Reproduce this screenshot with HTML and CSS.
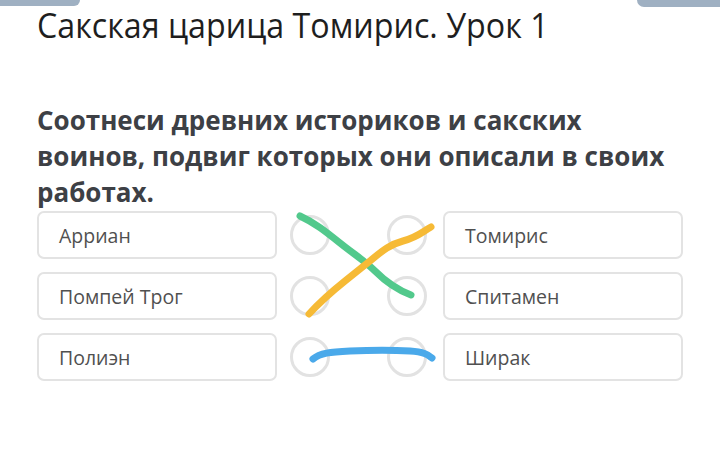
FILE: index.html
```html
<!DOCTYPE html>
<html lang="ru">
<head>
<meta charset="utf-8">
<link rel="stylesheet" href="styles.css">
</head>
<body>
<div class="tabs"><div class="tab tab-left"></div><div class="tab tab-right"></div></div>
<main class="page">
  <h1 class="title"><span class="title-text">Сакская царица Томирис. Урок 1</span></h1>
  <p class="question">Соотнеси древних историков и сакских воинов, подвиг которых они описали в своих работах.</p>
  <div class="match">
    <div class="box">Арриан</div>
    <div class="mid"><span class="dot"></span><span class="dot"></span></div>
    <div class="box">Томирис</div>
    <div class="box">Помпей Трог</div>
    <div class="mid"><span class="dot"></span><span class="dot"></span></div>
    <div class="box">Спитамен</div>
    <div class="box">Полиэн</div>
    <div class="mid"><span class="dot"></span><span class="dot"></span></div>
    <div class="box">Ширак</div>
    <svg class="lines" width="166" height="180" viewBox="277 206 166 180">
      <path d="M300 217 C315 224 325 232 340 244 S365 262 375 272 S395 290 411 296" class="ln green"/>
      <path d="M309 315 C320 303 330 294 345 282 S360 270 370 262 S388 246 403 242 S422 233 431 228" class="ln orange"/>
      <path d="M313 360 C320 354 330 353 350 352 S395 351 410 352 S428 356 432 359" class="ln blue"/>
    </svg>
  </div>
</main>
</body>
</html>
```
FILE: styles.css
```css
html, body {
  margin: 0;
  padding: 0;
  background: #ffffff;
}
body {
  width: 720px;
  height: 449px;
  overflow: hidden;
  position: relative;
  font-family: "Open Sans", "Noto Sans", sans-serif;
}
.tabs {
  display: flex;
  justify-content: space-between;
  height: 7px;
}
.tab {
  background: #9fb0c2;
  height: 6px;
}
.tab-left {
  width: 80px;
  border-bottom-right-radius: 8px;
}
.tab-right {
  width: 83px;
  height: 7px;
  border-bottom-left-radius: 8px;
}
.page {
  padding-left: 37px;
}
.title {
  margin: 0;
  font-weight: 400;
  font-size: 35px;
  line-height: 36px;
  color: #1e1e1e;
  height: 40px;
  white-space: nowrap;
}
.title-text {
  display: inline-block;
  transform-origin: 0 50%;
  transform: scaleX(0.92);
}
.question {
  margin: 55px 0 0 0;
  width: 650px;
  font-weight: 700;
  font-size: 26px;
  line-height: 36px;
  color: #3d4045;
}
.match {
  position: relative;
  margin-top: 1px;
  display: grid;
  grid-template-columns: 240px 166px 240px;
  grid-auto-rows: 48px;
  row-gap: 13px;
}
.box {
  box-sizing: border-box;
  border: 2px solid #e3e3e3;
  border-radius: 7px;
  padding-left: 20px;
  display: flex;
  align-items: center;
  font-size: 19.5px;
  color: #505050;
  background: #fff;
}
.mid {
  display: flex;
  align-items: center;
  justify-content: space-between;
  padding: 0 16px 0 13px;
}
.dot {
  box-sizing: border-box;
  width: 40px;
  height: 40px;
  border-radius: 50%;
  border: 3px solid #e2e2e2;
}
.lines {
  position: absolute;
  left: 240px;
  top: -6px;
}
.ln {
  fill: none;
  stroke-width: 7;
  stroke-linecap: round;
  stroke-linejoin: round;
}
.green { stroke: #52c98c; }
.orange { stroke: #f6ba36; }
.blue { stroke: #4aa9ea; }
```
